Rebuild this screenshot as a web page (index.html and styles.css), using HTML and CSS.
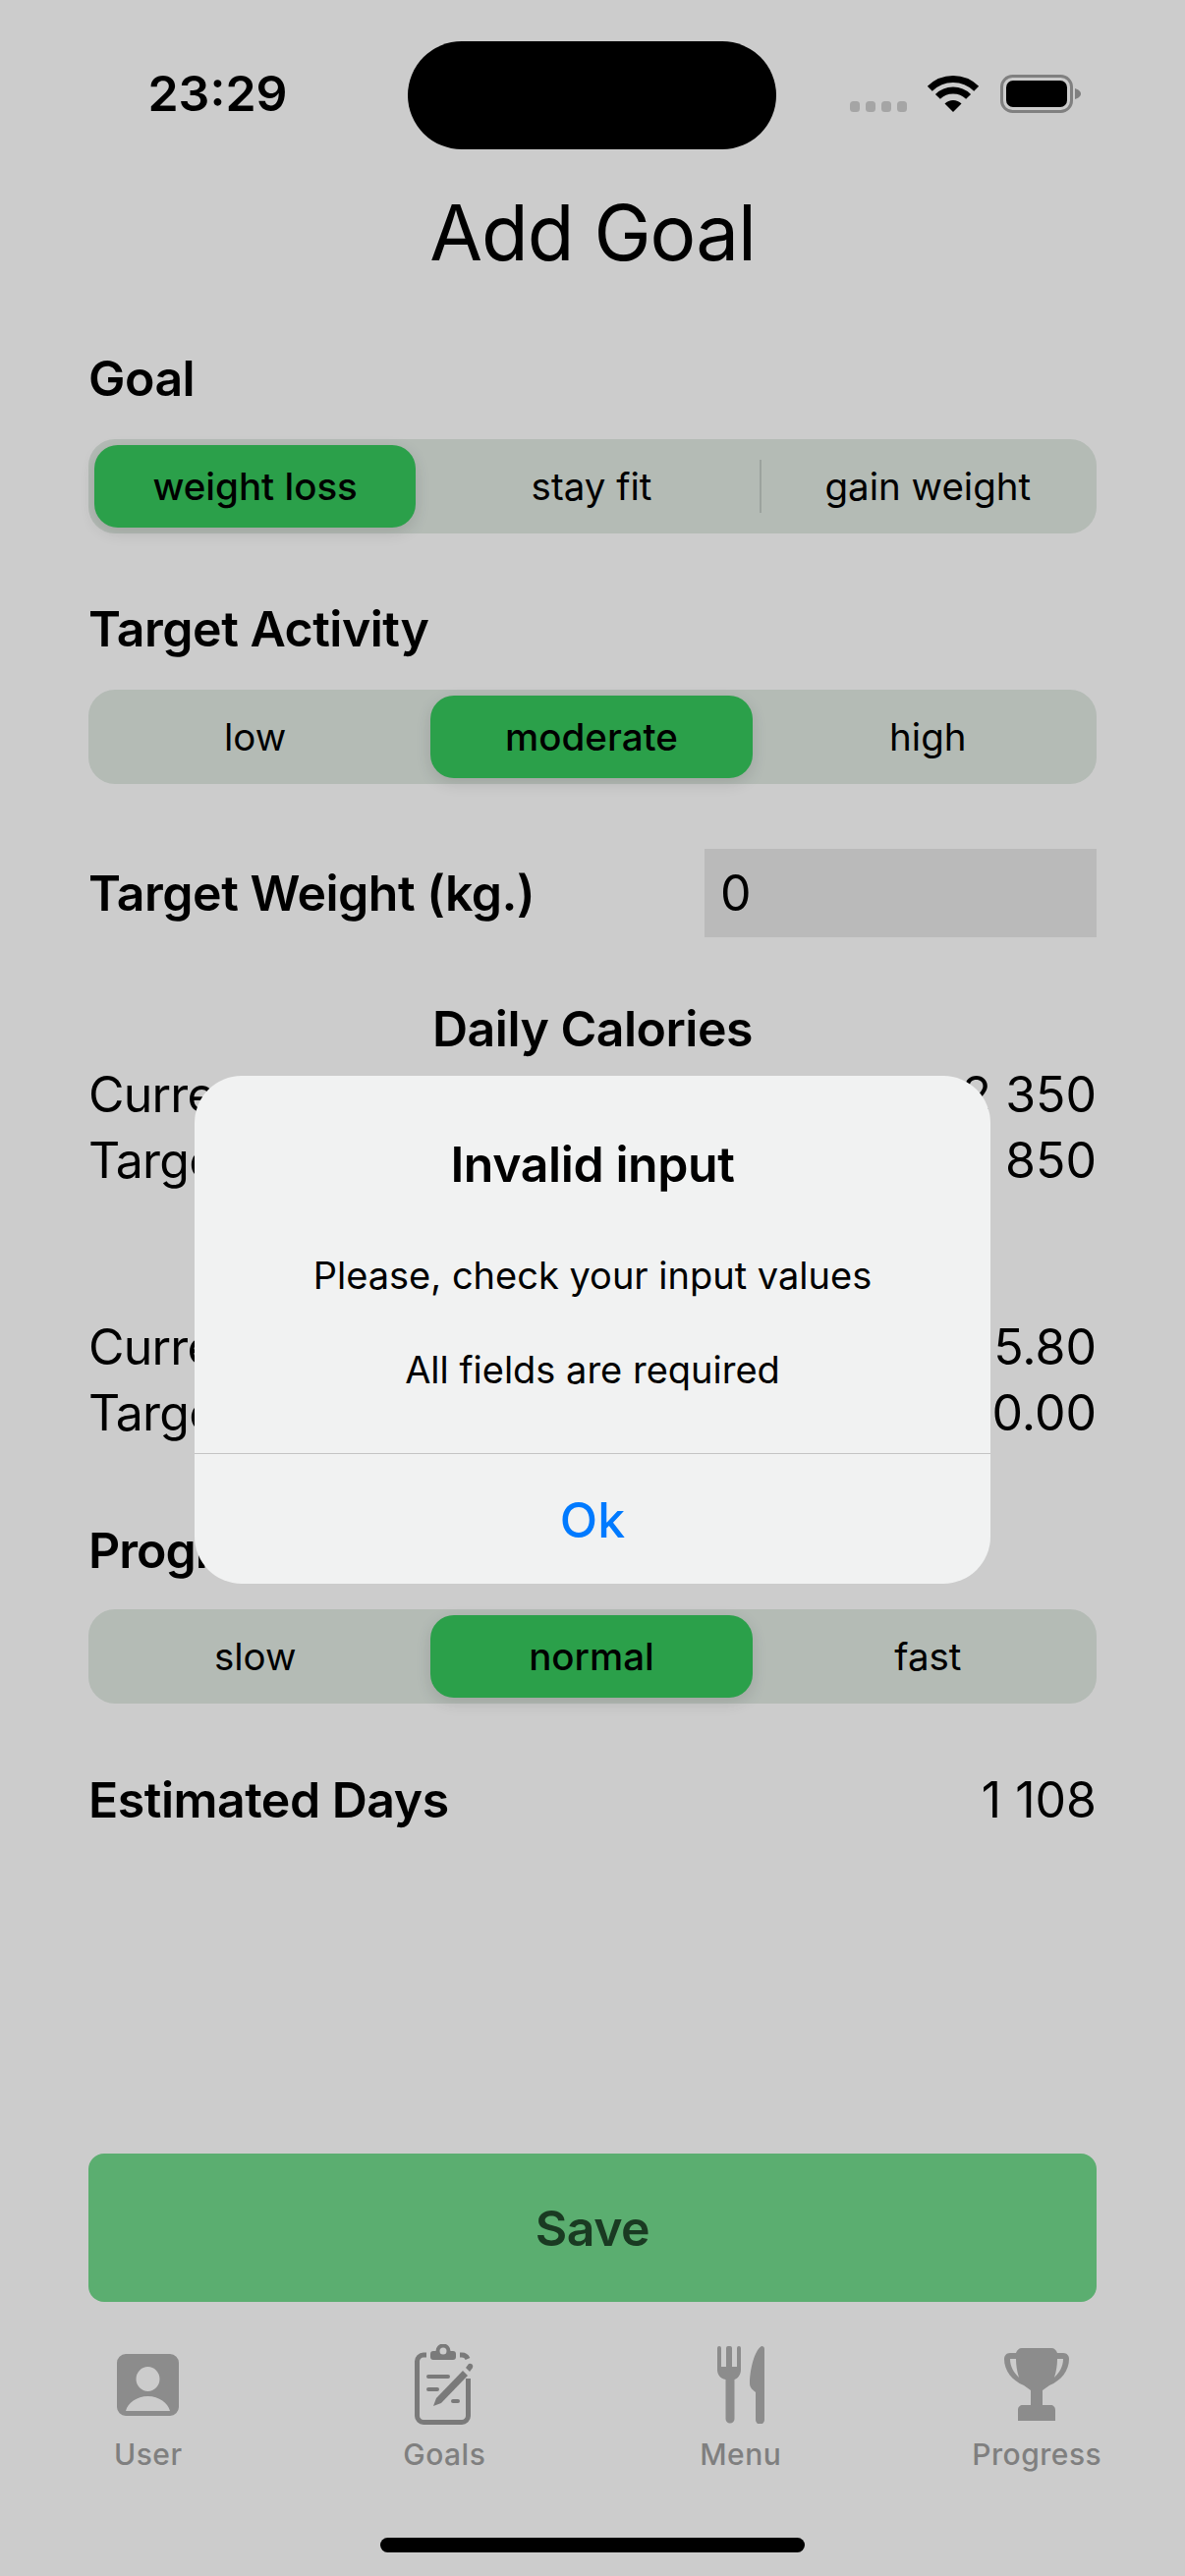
FILE: index.html
```html
<!DOCTYPE html>
<html lang="en">
<head>
    <meta charset="UTF-8">
    <title>Add Goal</title>
    <link rel="stylesheet" href="styles.css">
</head>
<body>
    <div class="page">
        <div class="status-bar">
            <div class="status-time">23:29</div>
            <div class="island"></div>
            <div class="status-icons">
                <svg width="235" height="39" viewBox="0 0 235 39">
                    <g fill="#cfcfcf">
                        <rect x="0" y="27" width="10" height="11" rx="3.5"/>
                        <rect x="16" y="27" width="10" height="11" rx="3.5"/>
                        <rect x="32" y="27" width="10" height="11" rx="3.5"/>
                        <rect x="48" y="27" width="10" height="11" rx="3.5"/>
                    </g>
                    <path d="M81.3 14.3A33.5 33.5 0 0 1 128.7 14.3M89.4 22.4A22 22 0 0 1 120.6 22.4" fill="none" stroke="#000" stroke-width="7"/>
                    <path d="M105 38L96.5 29.5A12 12 0 0 1 113.5 29.5Z" fill="#000"/>
                    <rect x="154.5" y="1.5" width="71" height="36" rx="11" fill="none" stroke="#a0a0a0" stroke-width="3"/>
                    <rect x="159" y="6" width="62" height="27" rx="7" fill="#000"/>
                    <path d="M229 14C232.5 15 235 17 235 19.5S232.5 24 229 25Z" fill="#a0a0a0"/>
                </svg>
            </div>
        </div>

        <h1 class="title">Add Goal</h1>

        <div class="label label-goal">Goal</div>
        <div class="segment">
            <div class="segment-item selected">weight loss</div>
            <div class="segment-item with-line">stay fit</div>
            <div class="segment-item">gain weight</div>
        </div>

        <div class="label label-activity">Target Activity</div>
        <div class="segment">
            <div class="segment-item">low</div>
            <div class="segment-item selected">moderate</div>
            <div class="segment-item">high</div>
        </div>

        <div class="weight-row">
            <div class="label">Target Weight (kg.)</div>
            <input class="weight-input" type="text" value="0">
        </div>

        <div class="label center calories-head">Daily Calories</div>
        <div class="value-row calories-first"><span class="value-name">Current</span><span>2 350</span></div>
        <div class="value-row"><span class="value-name">Target</span><span>1 850</span></div>

        <div class="value-row second-block"><span class="value-name">Current</span><span>25.80</span></div>
        <div class="value-row"><span class="value-name">Target</span><span>0.00</span></div>

        <div class="label label-progress">Progress</div>
        <div class="segment">
            <div class="segment-item">slow</div>
            <div class="segment-item selected">normal</div>
            <div class="segment-item">fast</div>
        </div>

        <div class="days-row">
            <div class="label">Estimated Days</div>
            <div class="days-value">1 108</div>
        </div>

        <button class="save-button">Save</button>

        <div class="tab-bar">
            <div class="tab">
                <div class="tab-icon">
                    <svg width="63" height="63" viewBox="0 0 63 63">
                        <path fill="#afafaf" fill-rule="evenodd" d="M9 0H54A9 9 0 0 1 63 9V54A9 9 0 0 1 54 63H9A9 9 0 0 1 0 54V9A9 9 0 0 1 9 0ZM31.5 13A12 12.500 0 1 0 31.500 38A12 12.500 0 1 0 31.500 13ZM9 58H54C52 50 43 43 31.500 43S11 50 9 58Z"/>
                    </svg>
                </div>
                <div class="tab-label">User</div>
            </div>
            <div class="tab">
                <div class="tab-icon">
                    <svg width="60" height="82" viewBox="0 0 60 82">
                        <path d="M12 11H9A6.500 6.500 0 0 0 2.500 17.500V73A6.500 6.500 0 0 0 9 79.500H48A6.500 6.500 0 0 0 54.500 73V35M46 11H48A6.500 6.500 0 0 1 54 15" fill="none" stroke="#999" stroke-width="5"/>
                        <path fill="#999" fill-rule="evenodd" d="M19 7H21.500A7.500 7.500 0 0 1 36.500 7H39A3 3 0 0 1 42 10V13A3 3 0 0 1 39 16H19A3 3 0 0 1 16 13V10A3 3 0 0 1 19 7ZM29 3.500A3.500 3.500 0 1 0 29 10.500A3.500 3.500 0 1 0 29 3.500Z"/>
                        <path d="M14 33H34M14 46H23M39 58H44" fill="none" stroke="#999" stroke-width="4" stroke-linecap="round"/>
                        <path fill="#999" d="M19 63L22 55L49 27L54 32L27 60Z"/>
                        <path fill="#999" d="M52 24L55 20A3 3 0 0 1 59 24L56 28Z"/>
                    </svg>
                </div>
                <div class="tab-label">Goals</div>
            </div>
            <div class="tab">
                <div class="tab-icon">
                    <svg width="48" height="79" viewBox="0 0 48 79">
                        <path fill="#afafaf" d="M2 0A2 2 0 0 1 4 2V21H9V2A2 2 0 0 1 11 0H13A2 2 0 0 1 15 2V21H20V2A2 2 0 0 1 22 0A2 2 0 0 1 24 2V24C24 29 21 33 17.500 34V74A4.500 4.500 0 0 1 8.500 74V34C3 33 0 29 0 24V2A2 2 0 0 1 2 0Z"/>
                        <path fill="#afafaf" d="M45 0A3 3 0 0 1 48 3V75A4 4 0 0 1 39 75V47C37 45 33 43 33 38C33 24 38 4 45 0Z"/>
                    </svg>
                </div>
                <div class="tab-label">Menu</div>
            </div>
            <div class="tab">
                <div class="tab-icon">
                    <svg width="66" height="74" viewBox="0 0 66 74">
                        <path fill="#afafaf" fill-rule="evenodd" d="M18 0H48C51 0 53 2 54 5H60C64 5 66 8 66 11C66 23 58 33 46 38L39 43V58H47C50 58 52 60 52 63V74H14V63C14 60 16 58 19 58H27V43L20 38C8 33 0 23 0 11C0 8 2 5 6 5H12C13 2 15 0 18 0ZM6 11C6 19 10 25 15 30C13 24 12 17 12 11ZM54 11C54 17 53 24 51 30C56 25 60 19 60 11Z"/>
                    </svg>
                </div>
                <div class="tab-label">Progress</div>
            </div>
        </div>

        <div class="home-indicator"></div>
    </div>

    <div class="scrim">
        <div class="alert">
            <div class="alert-title">Invalid input</div>
            <div class="alert-text alert-text-first">Please, check your input values</div>
            <div class="alert-text alert-text-second">All fields are required</div>
            <div class="alert-button">Ok</div>
        </div>
    </div>
</body>
</html>
```

FILE: styles.css
```css
* {
    box-sizing: border-box;
}

html, body {
    margin: 0;
    height: 2622px;
    overflow: hidden;
}

body {
    background-color: #fff;
    color: #000;
    font-family: Inter, "Liberation Sans", sans-serif;
}

.page {
    display: flex;
    flex-direction: column;
    height: 2622px;
    padding: 0 90px;
}

/* Status bar */
.status-bar {
    display: flex;
    height: 152px;
    margin: 0 -90px;
    padding-top: 42px;
}

.status-time {
    width: 415px;
    padding: 27px 0 0 28px;
    text-align: center;
    font-size: 50px;
    line-height: 52px;
    font-weight: 600;
}

.island {
    width: 375px;
    height: 110px;
    background-color: #000;
    border-radius: 55px;
}

.status-icons {
    padding: 34px 0 0 75px;
}

.status-icons svg {
    display: block;
}

.title {
    margin: 40px 0 0;
    text-align: center;
    font-size: 78px;
    line-height: 90px;
    font-weight: 400;
    letter-spacing: -1px;
}

.label {
    font-size: 50px;
    line-height: 60px;
    font-weight: 600;
    letter-spacing: -0.5px;
}

.center {
    text-align: center;
}

.label-goal {
    margin-top: 73px;
}

.label-activity {
    margin-top: 67px;
}

.label-progress {
    margin-top: 76px;
    letter-spacing: -1px;
}

/* Segmented controls */
.segment {
    display: grid;
    grid-template-columns: repeat(3, 1fr);
    gap: 15px;
    height: 96px;
    margin-top: 32px;
    padding: 6px 8px 6px 6px;
    background-color: #e1eae3;
    border-radius: 27px;
}

.label-progress + .segment {
    margin-top: 30px;
}

.segment-item {
    display: flex;
    position: relative;
    align-items: center;
    justify-content: center;
    font-size: 38.500px;
    border-radius: 24px;
}

.segment-item.selected {
    background-color: #36c85d;
    font-weight: 500;
    box-shadow: 0 5px 16px rgba(0, 0, 0, 0.12);
}

.segment-item.with-line::after {
    content: "";
    position: absolute;
    top: 15px;
    bottom: 15px;
    right: -9px;
    width: 2px;
    background-color: #c4ccc6;
}

.weight-row {
    display: flex;
    align-items: center;
    justify-content: space-between;
    height: 90px;
    margin-top: 66px;
}

.weight-input {
    width: 399px;
    height: 90px;
    padding: 0 16px;
    background-color: #e9e9e9;
    border: none;
    border-radius: 0;
    font-family: inherit;
    font-size: 50px;
    color: #000;
}

.calories-head {
    margin-top: 63px;
}

.calories-first {
    margin-top: 4px;
}

.second-block {
    margin-top: 123px;
}

.value-row {
    display: flex;
    justify-content: space-between;
    font-size: 50px;
    line-height: 67px;
}

.value-name {
    letter-spacing: -0.8px;
}

.days-row {
    display: flex;
    justify-content: space-between;
    margin-top: 68px;
}

.days-value {
    font-size: 50px;
    line-height: 60px;
}

.save-button {
    flex: none;
    height: 151px;
    margin-top: auto;
    background-color: #72da8c;
    border: none;
    border-radius: 16px;
    font-family: inherit;
    font-size: 50px;
    font-weight: 600;
    letter-spacing: -0.5px;
    color: #21492b;
}

/* Tabs */
.tab-bar {
    display: grid;
    grid-template-columns: repeat(4, 1fr);
    margin: 0 -90px;
    padding-top: 43px;
}

.tab {
    display: flex;
    flex-direction: column;
    align-items: center;
}

.tab-icon {
    display: flex;
    align-items: center;
    justify-content: center;
    height: 82px;
}

.tab-icon svg {
    display: block;
}

.tab-label {
    margin-top: 12px;
    font-size: 30px;
    line-height: 36px;
    font-weight: 500;
    color: #9f9f9f;
    letter-spacing: 0.5px;
}

.home-indicator {
    flex: none;
    width: 432px;
    height: 15px;
    margin: 67px auto 24px;
    background-color: #000;
    border-radius: 8px;
}

/* Alert on top of the page */
.scrim {
    position: fixed;
    top: 0;
    left: 0;
    width: 1206px;
    height: 2622px;
    padding-top: 1095px;
    background-color: rgba(0, 0, 0, 0.2);
}

.alert {
    display: flex;
    flex-direction: column;
    width: 810px;
    height: 517px;
    margin: 0 auto;
    padding-top: 60px;
    background-color: #f1f2f2;
    border-radius: 48px;
    text-align: center;
}

.alert-title {
    font-size: 50px;
    line-height: 60px;
    font-weight: 600;
    letter-spacing: -0.4px;
}

.alert-text {
    font-size: 38px;
    line-height: 50px;
}

.alert-text-first {
    margin-top: 58px;
}

.alert-text-second {
    margin-top: 46px;
}

.alert-button {
    display: flex;
    flex: 1;
    align-items: center;
    justify-content: center;
    margin-top: 60px;
    padding-top: 2px;
    border-top: 1px solid #c4c4c4;
    font-size: 50px;
    font-weight: 500;
    color: #007aff;
}
```
